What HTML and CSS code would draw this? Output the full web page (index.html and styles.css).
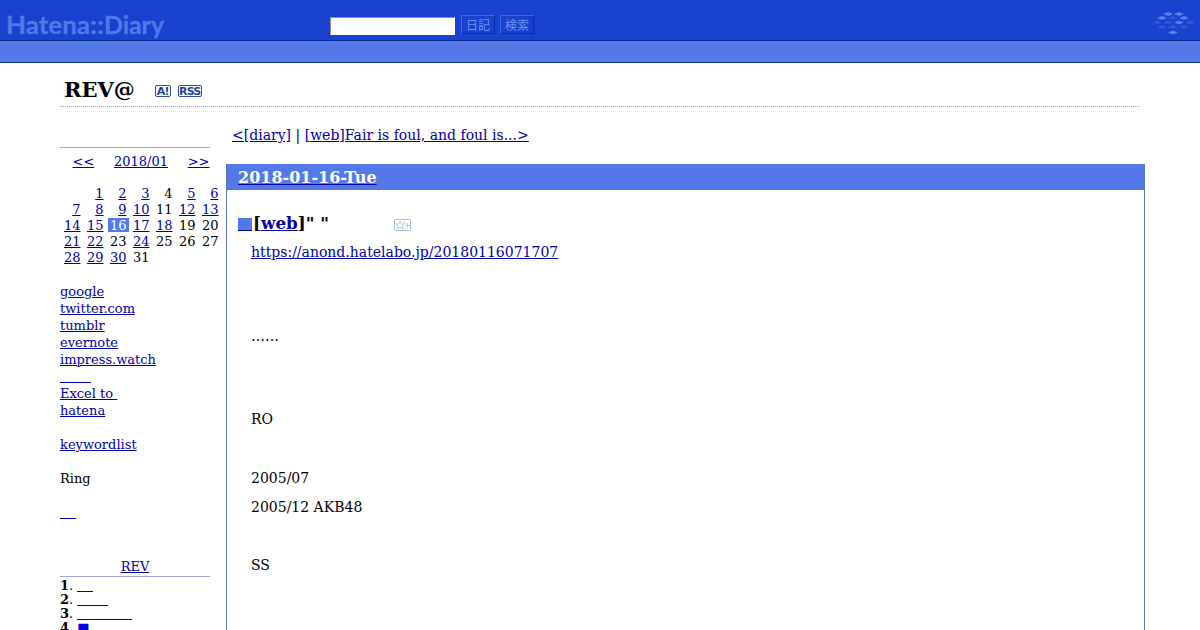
FILE: index.html
```html
<!DOCTYPE html>
<html lang="ja">
<head>
    <meta charset="utf-8">
    <title>REV@</title>
    <link rel="stylesheet" href="styles.css">
</head>
<body>
    <div class="banner">
        <a class="logo" href="#">
            <svg width="170" height="40" viewBox="0 0 170 40">
                <text x="6" y="34" textLength="84" lengthAdjust="spacingAndGlyphs">Hatena</text>
                <text x="90" y="34" textLength="14" lengthAdjust="spacingAndGlyphs">::</text>
                <text x="104" y="34" textLength="60" lengthAdjust="spacingAndGlyphs">Diary</text>
            </svg>
        </a>
        <form class="search">
            <input type="text" class="word">
            <button type="button">日記</button>
            <button type="button">検索</button>
        </form>
        <svg class="mark" width="44" height="26" viewBox="0 0 44 26">
            <g fill="#5b80ea">
                <path d="M10 4l5-2 5 2-5 2zM21 4l5-2 5 2-5 2zM4 8l5-2 5 2-5 2zM26 8l5-2 5 2-5 2zM21 12.500l5-2 5 2-5 2zM15 22.500l5-2 5 2-5 2z"/>
            </g>
            <g fill="#2f55d8">
                <path d="M15 8l5-2 5 2-5 2zM0 12.500l4-2 5 2-5 2zM10 12.500l5-2 5 2-5 2zM32 12.500l5-2 5 2-5 2zM4 17l5-2 5 2-5 2zM15 17l5-2 5 2-5 2zM26 17l5-2 5 2-5 2z"/>
            </g>
        </svg>
    </div>
    <div class="subbar"></div>

    <div class="title">
        <h1>REV@</h1>
        <span class="badge antenna">A!</span>
        <span class="badge">RSS</span>
    </div>

    <div class="page">
        <div class="sidebar">
            <div class="month">
                <a href="#">&lt;&lt;</a>
                <a href="#">2018/01</a>
                <a href="#">&gt;&gt;</a>
            </div>
            <div class="calendar">
                <span></span><a href="#">1</a><a href="#">2</a><a href="#">3</a><span>4</span><a href="#">5</a><a href="#">6</a>
                <a href="#">7</a><a href="#">8</a><a href="#">9</a><a href="#">10</a><span>11</span><a href="#">12</a><a href="#">13</a>
                <a href="#">14</a><a href="#">15</a><span class="selected">16</span><a href="#">17</a><a href="#">18</a><span>19</span><span>20</span>
                <a href="#">21</a><a href="#">22</a><span>23</span><a href="#">24</a><span>25</span><span>26</span><span>27</span>
                <a href="#">28</a><a href="#">29</a><a href="#">30</a><span>31</span>
            </div>
            <div class="links">
                <a href="#">google</a><br>
                <a href="#">twitter.com</a><br>
                <a href="#">tumblr</a><br>
                <a href="#">evernote</a><br>
                <a href="#">impress.watch</a><br>
                <a href="#" class="blank w4"></a><br>
                <a href="#">Excel to&nbsp;</a><br>
                <a href="#">hatena</a><br>
                <br>
                <a href="#">keywordlist</a><br>
                <br>
                Ring<br>
                <br>
                <a href="#" class="blank w2"></a>
            </div>
            <div class="ranking-title"><a href="#">REV</a></div>
            <div class="ranking">
                <div><b>1</b>. <a href="#" class="blank w2"></a></div>
                <div><b>2</b>. <a href="#" class="blank w4"></a></div>
                <div><b>3</b>. <a href="#" class="blank w7"></a></div>
                <div><b>4</b>. <a href="#" class="item">■</a></div>
            </div>
        </div>

        <div class="main">
            <div class="pager"><a href="#">&lt;[diary]</a> | <a href="#">[web]Fair is foul, and foul is...&gt;</a></div>
            <div class="day">
                <h2><a href="#"><span>2018-01-16-Tue</span></a></h2>
                <div class="body">
                    <h3>
                        <a href="#" class="anchor"></a>[<a href="#">web</a>]" "
                        <svg class="star" width="18" height="13" viewBox="0 0 18 13" fill="none" stroke="#a9bfdf">
                            <rect x=".5" y=".5" width="16" height="11" rx="1"/>
                            <path d="M6 2l1.200 3H10L8 7l1 3-3-1.800L3 10l1-3-2-2h2.800zM10 2.500l1 2.500M9.500 9l1.500.500M13.500 4v5M11 6.500h5" stroke-width=".8"/>
                        </svg>
                    </h3>
                    <p><a href="#">https://anond.hatelabo.jp/20180116071707</a></p>
                    <p class="gap-l">……</p>
                    <p class="gap-m">RO</p>
                    <p class="gap-s">2005/07</p>
                    <p>2005/12 AKB48</p>
                    <p class="gap-e">SS</p>
                </div>
            </div>
        </div>
    </div>
</body>
</html>
```

FILE: styles.css
```css
body {
    margin: 0;
    height: 630px;
    overflow: hidden;
    background: #fff;
    color: #000;
    font-family: "DejaVu Serif", serif;
    font-size: 14px;
}

a {
    color: #0000a8;
}

.banner {
    display: flex;
    height: 40px;
    background: #1841ce;
    border-bottom: 1px solid #08268c;
}

.logo {
    width: 330px;
}

.logo text {
    font: bold 25px Lato, sans-serif;
    fill: #5279e7;
    stroke: #5279e7;
    stroke-width: 0.3px;
}

.search {
    display: flex;
    align-items: flex-start;
    padding-top: 16px;
}

.search .word {
    box-sizing: border-box;
    width: 125px;
    height: 18px;
    margin: 1px 6px 0 0;
    border: 1px solid #fff;
    border-top: 1px solid #8c8c94;
    border-left: 1px solid #8c8c94;
    background: #fff;
}

.search button {
    box-sizing: border-box;
    width: 34px;
    height: 19px;
    margin: -1px 5px 0 0;
    padding: 0;
    border: 1px solid #4065df;
    border-right-color: #0c2da8;
    border-bottom-color: #0c2da8;
    background: #1841ce;
    color: #6f91f4;
    font: 12px/15px "Noto Sans CJK JP", sans-serif;
}

.mark {
    margin: 10px 3px 0 auto;
}

.subbar {
    height: 21px;
    background: #5279e7;
    border-bottom: 1px solid #10308c;
}

.title {
    display: flex;
    align-items: center;
    box-sizing: border-box;
    height: 44px;
    margin: 0 60px;
    padding: 10px 0 0 4px;
    border-bottom: 1px dotted #a0a8b8;
}

.title h1 {
    margin: 0 20px 0 0;
    font-size: 21px;
    line-height: 26px;
}

.badge {
    box-sizing: border-box;
    width: 24px;
    height: 12px;
    margin: 3px 0 0 7px;
    border: 1px solid #31519c;
    border-radius: 2px;
    color: #21459c;
    font: bold 11px/11px "DejaVu Sans", sans-serif;
    letter-spacing: -0.8px;
    text-align: center;
}

.badge.antenna {
    width: 16px;
    margin-left: 0;
}

.page {
    display: flex;
    padding-left: 60px;
}

.sidebar {
    width: 166px;
    padding-top: 40px;
    font-size: 13px;
}

.month {
    display: flex;
    justify-content: space-between;
    width: 137px;
    height: 26px;
    padding-left: 12.5px;
    border-top: 1px solid #a5a6d6;
    line-height: 28px;
}

.calendar {
    display: grid;
    grid-template-columns: repeat(7, 21px);
    grid-auto-rows: 14px;
    gap: 2px;
    margin: 12px 0 0 2px;
    line-height: 15px;
    text-align: right;
}

.calendar a,
.calendar span {
    padding-right: 2.5px;
}

.calendar .selected {
    height: 14px;
    background: #5279e7;
    color: #fff;
}

.links {
    margin-top: 19px;
    line-height: 17px;
}

.blank {
    display: inline-block;
    height: 8px;
    margin-bottom: -2px;
    border-bottom: 1px solid #0000a8;
}

.w2 {
    width: 16px;
}

.w4 {
    width: 31px;
}

.w7 {
    width: 55px;
}

.ranking-title {
    width: 150px;
    height: 18px;
    margin-top: 37px;
    border-bottom: 1px solid #a5a6d6;
    line-height: 18px;
    text-align: center;
}

.ranking {
    margin-top: 2px;
    line-height: 14px;
}

.ranking .item {
    color: #0000e0;
}

.main {
    width: 919px;
}

.pager {
    padding: 18px 0 0 6px;
    line-height: 20px;
}

.day {
    box-sizing: border-box;
    margin-top: 19px;
    height: 466px;
    border: 1px solid #5477ad;
    border-top-color: #5279e7;
    border-bottom: 0;
}

.day h2 {
    height: 25px;
    margin: 0;
    padding-left: 11px;
    background: #5279e7;
    font-size: 16px;
    line-height: 26px;
}

.day h2 a span {
    color: #fff;
}

.body {
    padding: 22px 0 0 24px;
}

.body h3 {
    display: flex;
    align-items: center;
    margin: 0 0 10px -13px;
    font-size: 16.8px;
    line-height: 22px;
}

.anchor {
    width: 14px;
    height: 12px;
    margin: 2px 1px 0 0;
    background: #5279e7;
    border-bottom: 1px solid #0000a8;
}

.star {
    margin: 4px 0 0 64.5px;
}

.body p {
    margin: 0 0 12px;
    line-height: 17px;
}

.body .gap-l {
    margin-top: 67px;
}

.body .gap-m {
    margin-top: 66px;
}

.body .gap-s {
    margin-top: 42px;
}

.body .gap-e {
    margin-top: 41px;
}
```
